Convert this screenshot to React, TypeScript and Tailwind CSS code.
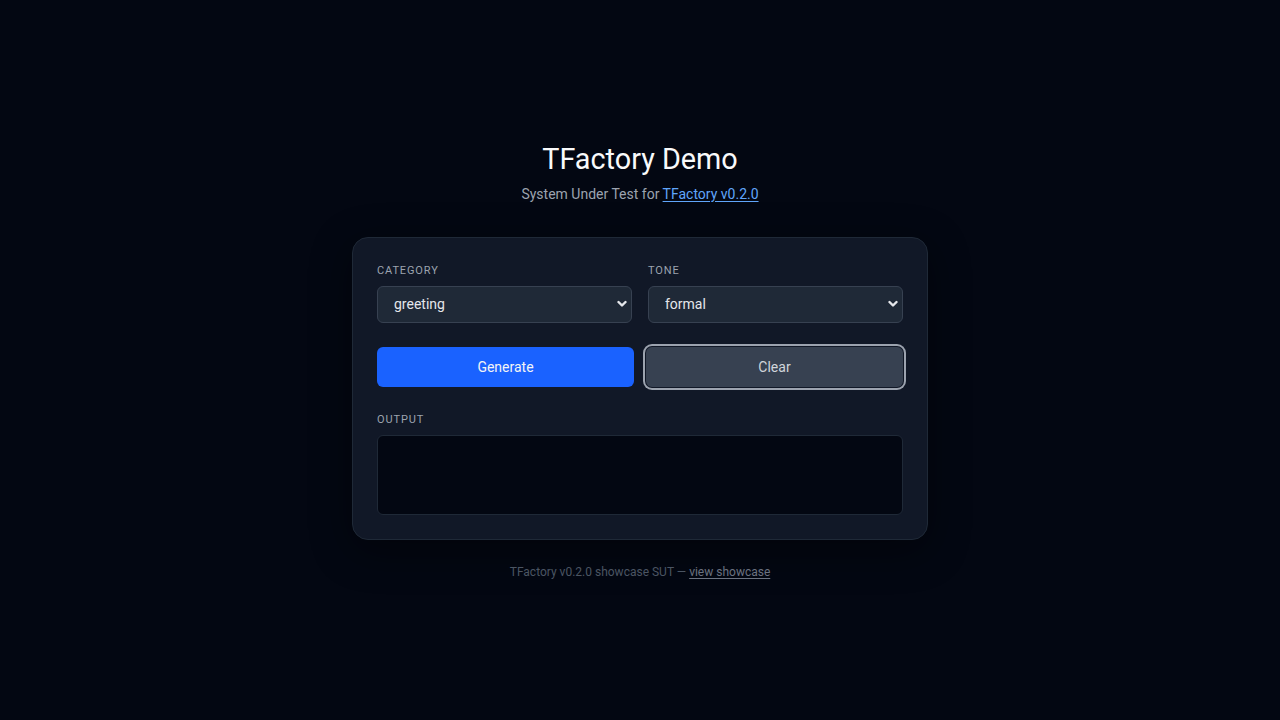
import React, { useState } from 'react';

const categories = ['greeting', 'farewell', 'apology', 'thanks'];
const tones = ['formal', 'casual', 'friendly'];

const Chevron: React.FC = () => (
  <svg
    className="pointer-events-none absolute right-[5px] top-1/2 -translate-y-1/2"
    width="10"
    height="8"
    viewBox="0 0 10 8"
    fill="none"
  >
    <path d="M1.5 2 5 5.5 8.5 2" stroke="#e5e7eb" strokeWidth="2.4" strokeLinecap="round" strokeLinejoin="round" />
  </svg>
);

const Field: React.FC<{ label: string; value: string; options: string[]; onChange: (v: string) => void }> = ({
  label,
  value,
  options,
  onChange,
}) => (
  <div className="flex flex-col">
    <label className="mb-[6px] text-[11px] leading-[18px] tracking-[0.08em] text-[#9ca3af] uppercase">{label}</label>
    <div className="relative">
      <select
        value={value}
        onChange={(e) => onChange(e.target.value)}
        className="h-[37px] w-full appearance-none rounded-md border border-[#374151] bg-[#1f2937] pl-4 pr-8 text-sm text-[#e5e7eb] outline-none"
      >
        {options.map((o) => (
          <option key={o} value={o}>
            {o}
          </option>
        ))}
      </select>
      <Chevron />
    </div>
  </div>
);

const App: React.FC = () => {
  const [category, setCategory] = useState('greeting');
  const [tone, setTone] = useState('formal');
  const [output, setOutput] = useState('');

  return (
    <div
      className="flex min-h-screen flex-col items-center justify-center bg-[#030712] pb-[2px] text-white"
      style={{ fontFamily: 'Roboto, "DejaVu Sans", sans-serif' }}
    >
      <h1 className="text-[28.8px] leading-10 font-normal text-[#f9fafb]">TFactory Demo</h1>
      <p className="mt-[5px] text-sm leading-5 text-[#9ca3af]">
        System Under Test for{' '}
        <a href="#" className="text-[#60a5fa] underline underline-offset-2">
          TFactory v0.2.0
        </a>
      </p>

      <div className="mt-[33px] w-[576px] rounded-2xl border border-[#1f2937] bg-[#111827] p-6 shadow-[0_10px_40px_rgba(0,0,0,0.45)]">
        <div className="grid grid-cols-2 gap-4">
          <Field label="Category" value={category} options={categories} onChange={setCategory} />
          <Field label="Tone" value={tone} options={tones} onChange={setTone} />
        </div>

        <div className="mt-6 grid grid-cols-2 gap-3">
          <button
            onClick={() => setOutput(`${tone} ${category}`)}
            className="h-10 rounded-md bg-[#1a62ff] text-sm text-[#f3f4f6]"
          >
            Generate
          </button>
          <button
            onClick={() => setOutput('')}
            className="h-10 rounded-md bg-[#374151] text-sm text-[#d1d5db] ring-2 ring-[#9ca3af] ring-offset-1 ring-offset-[#111827]"
          >
            Clear
          </button>
        </div>

        <div className="mt-6 mb-[6px] text-[11px] leading-[18px] tracking-[0.08em] text-[#9ca3af] uppercase">Output</div>
        <div className="h-20 rounded-md border border-[#1f2937] bg-[#030712] p-3 text-sm text-[#e5e7eb]">{output}</div>
      </div>

      <p className="mt-6 text-xs leading-4 text-[#4b5563]">
        TFactory v0.2.0 showcase SUT —{' '}
        <a href="#" className="text-[#6b7280] underline underline-offset-2">
          view showcase
        </a>
      </p>
    </div>
  );
};

export default App;
